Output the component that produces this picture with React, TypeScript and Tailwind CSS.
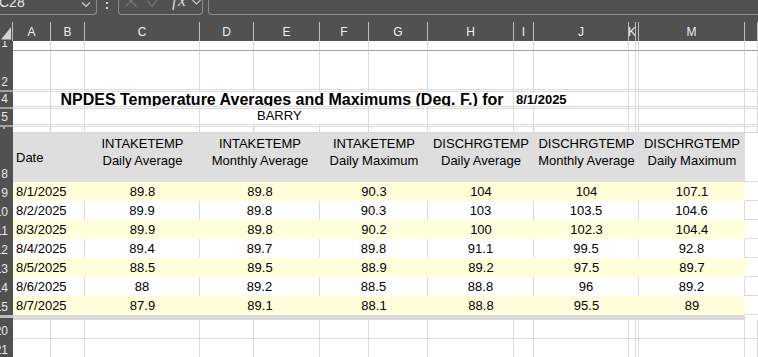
import React from "react";

const COLS: [string, string][] = [
  ["A", "w-[38px]"],
  ["B", "w-[34px]"],
  ["C", "w-[115px]"],
  ["D", "w-[54px]"],
  ["E", "w-[66px]"],
  ["F", "w-[49px]"],
  ["G", "w-[59px]"],
  ["H", "w-[86px]"],
  ["I", "w-[20px]"],
  ["J", "w-[95px]"],
  ["K", "w-[7px]"],
  ["L", "w-[3px]"],
  ["M", "w-[106px]"],
  ["N", "w-[13px]"],
];

const HEAD_LABELS: Record<string, string> = {
  A: "A", B: "B", C: "C", D: "D", E: "E", F: "F", G: "G", H: "H", I: "I", J: "J", K: "K", L: "", M: "M", N: "",
};

const DW = ["w-[115px]", "w-[120px]", "w-[108px]", "w-[106px]", "w-[105px]", "w-[106px]"];

const HEAD = [
  ["INTAKETEMP", "Daily Average"],
  ["INTAKETEMP", "Monthly Average"],
  ["INTAKETEMP", "Daily Maximum"],
  ["DISCHRGTEMP", "Daily Average"],
  ["DISCHRGTEMP", "Monthly Average"],
  ["DISCHRGTEMP", "Daily Maximum"],
];

const DATA = [
  ["8/1/2025", "89.8", "89.8", "90.3", "104", "104", "107.1"],
  ["8/2/2025", "89.9", "89.8", "90.3", "103", "103.5", "104.6"],
  ["8/3/2025", "89.9", "89.8", "90.2", "100", "102.3", "104.4"],
  ["8/4/2025", "89.4", "89.7", "89.8", "91.1", "99.5", "92.8"],
  ["8/5/2025", "88.5", "89.5", "88.9", "89.2", "97.5", "89.7"],
  ["8/6/2025", "88", "89.2", "88.5", "88.8", "96", "89.2"],
  ["8/7/2025", "87.9", "89.1", "88.1", "88.8", "95.5", "89"],
];

function RowHead({ label, cls }: { label?: string; cls?: string }) {
  return (
    <div
      className={`w-[13px] shrink-0 h-full overflow-hidden flex items-end justify-end pr-[5px] pb-[2px] text-[12px] leading-none text-[#e8e8e8] ${
        cls ?? "bg-[#515151]"
      }`}
    >
      <span className="whitespace-nowrap">{label}</span>
    </div>
  );
}

function GridRow({
  h,
  label,
  headCls,
  bottom = "border-b-[#dadada]",
}: {
  h: string;
  label?: string;
  headCls?: string;
  bottom?: string;
}) {
  return (
    <div className={`flex ${h}`}>
      <RowHead label={label} cls={headCls} />
      {COLS.map(([k, w]) => (
        <div key={k} className={`${w} shrink-0 h-full border-r border-b border-r-[#dadada] ${bottom}`} />
      ))}
    </div>
  );
}

function TopBar() {
  return (
    <div className="h-[22px] bg-[#515151] flex items-start">
      {/* Name box */}
      <div className="w-[97px] h-[15px] shrink-0 border-r border-b border-r-[#8c8c8c] border-b-[#8c8c8c] rounded-br-[4px] overflow-hidden flex items-start justify-between">
        <span className="-mt-[5px] -ml-[1px] text-[14px] leading-[14px] text-[#e6e6e6]">C28</span>
        <svg width="10" height="7" viewBox="0 0 10 7" className="mt-[1px] mr-[5px]">
          <path d="M1 1.5 L5 5.5 L9 1.5" fill="none" stroke="#cfcfcf" strokeWidth="1.2" />
        </svg>
      </div>
      {/* colon */}
      <div className="ml-[9px] w-[2px] flex flex-col gap-[3px] pt-[2px]">
        <div className="w-[2px] h-[2px] bg-[#d0d0d0]" />
        <div className="w-[2px] h-[2px] bg-[#d0d0d0]" />
      </div>
      {/* cancel/enter/fx box */}
      <div className="ml-[10px] w-[85px] h-[15px] shrink-0 border-l border-r border-b border-l-[#8c8c8c] border-r-[#8c8c8c] border-b-[#8c8c8c] rounded-b-[4px] overflow-hidden flex items-start">
        <svg width="12" height="12" viewBox="0 0 12 12" className="ml-[6px] -mt-[5px] shrink-0">
          <path d="M0.5 0.5 L11.5 11.5 M11.5 0.5 L0.5 11.5" stroke="#7a7a7a" strokeWidth="1.1" fill="none" />
        </svg>
        <svg width="14" height="12" viewBox="0 0 14 12" className="ml-[10px] -mt-[5px] shrink-0">
          <path d="M0.5 6 L5 11.3 L13.5 0.5" stroke="#7a7a7a" strokeWidth="1.1" fill="none" />
        </svg>
        <div className="ml-[11px] w-[15px] shrink-0 -mt-[9px] font-['Liberation_Serif',serif] italic text-[18px] leading-[18px] tracking-[1px] text-[#d6d6d6]">
          fx
        </div>
        <svg width="9" height="6" viewBox="0 0 9 6" className="ml-[5px] -mt-[1px] shrink-0">
          <path d="M0.5 1 L4.5 5 L8.5 1" fill="none" stroke="#cfcfcf" strokeWidth="1.1" />
        </svg>
      </div>
      {/* formula input */}
      <div className="ml-[5px] flex-1 h-[15px] border-l border-b border-l-[#8c8c8c] border-b-[#8c8c8c] rounded-bl-[4px]" />
    </div>
  );
}

function ColumnHeader() {
  return (
    <div className="flex h-[19px] bg-[#515151] text-[12px] text-[#f0f0f0]">
      <div className="w-[13px] shrink-0 h-full border-r border-r-[#bdbdbd]">
        <svg width="12" height="19" viewBox="0 0 12 19">
          <polygon points="1,17.5 11,5 11,17.5" fill="#d4d4d4" />
        </svg>
      </div>
      {COLS.map(([k, w]) => (
        <div
          key={k}
          className={`${w} shrink-0 h-full border-r border-r-[#bdbdbd] overflow-hidden flex justify-center pt-[1px] leading-[18px]`}
        >
          <span className="whitespace-nowrap">{HEAD_LABELS[k]}</span>
        </div>
      ))}
    </div>
  );
}

export default function App() {
  const cellG = "border-r border-b border-r-[#dadada] border-b-[#dadada]";
  return (
    <div className="w-[758px] h-[357px] overflow-hidden bg-white font-['Liberation_Sans',Arial,sans-serif] text-[13px] text-black">
      <TopBar />
      <ColumnHeader />

      {/* Row 1 (frozen) */}
      <GridRow h="h-[10px]" label="1" bottom="border-b-[#9e9e9e]" />
      {/* Row 2 */}
      <GridRow h="h-[39px]" label="2" />
      {/* Row 3 hidden */}
      <GridRow h="h-[2px]" headCls="bg-[#a0a0a0]" />

      {/* Row 4 title */}
      <div className="flex h-[15px]">
        <RowHead label="4" />
        <div className={`w-[38px] shrink-0 h-full ${cellG}`} />
        <div className={`w-[463px] shrink-0 h-full overflow-hidden text-center whitespace-nowrap font-bold text-[16px] leading-[15px] ${cellG}`}>
          NPDES Temperature Averages and Maximums (Deg. F.) for
        </div>
        <div className={`w-[115px] shrink-0 h-full overflow-hidden pl-[2px] whitespace-nowrap font-bold text-[13px] leading-[15px] ${cellG}`}>
          8/1/2025
        </div>
        <div className={`w-[7px] shrink-0 h-full ${cellG}`} />
        <div className={`w-[3px] shrink-0 h-full ${cellG}`} />
        <div className={`w-[106px] shrink-0 h-full ${cellG}`} />
        <div className={`w-[13px] shrink-0 h-full ${cellG}`} />
      </div>
      <GridRow h="h-[2px]" headCls="bg-[#a0a0a0]" />

      {/* Row 5 BARRY */}
      <div className="flex h-[16px]">
        <RowHead label="5" />
        <div className={`w-[38px] shrink-0 h-full ${cellG}`} />
        <div className={`w-[34px] shrink-0 h-full ${cellG}`} />
        <div className={`w-[115px] shrink-0 h-full ${cellG}`} />
        <div className={`w-[169px] shrink-0 h-full pl-[57px] leading-[14px] ${cellG}`}>BARRY</div>
        <div className={`w-[59px] shrink-0 h-full ${cellG}`} />
        <div className={`w-[86px] shrink-0 h-full ${cellG}`} />
        <div className={`w-[20px] shrink-0 h-full ${cellG}`} />
        <div className={`w-[95px] shrink-0 h-full ${cellG}`} />
        <div className={`w-[7px] shrink-0 h-full ${cellG}`} />
        <div className={`w-[3px] shrink-0 h-full ${cellG}`} />
        <div className={`w-[106px] shrink-0 h-full ${cellG}`} />
        <div className={`w-[13px] shrink-0 h-full ${cellG}`} />
      </div>
      {/* Row 6 hidden */}
      <GridRow h="h-[2px]" headCls="bg-[#a0a0a0]" />
      {/* Row 7 */}
      <GridRow h="h-[6px]" label="7" />

      {/* Row 8 table header */}
      <div className="flex h-[49px]">
        <RowHead label="8" />
        <div className="w-[72px] shrink-0 h-full bg-[#dedede] flex items-center pl-[3px] leading-[17px]">Date</div>
        {HEAD.map((hd, j) => (
          <div key={j} className={`${DW[j]} shrink-0 h-full bg-[#dedede] text-center pt-[2px] leading-[17px] whitespace-nowrap`}>
            <div>{hd[0]}</div>
            <div>{hd[1]}</div>
          </div>
        ))}
        <div className="w-[13px] shrink-0 h-full border-b border-b-[#dadada]" />
      </div>

      {/* Data rows */}
      {DATA.map((r, i) => {
        const yellow = i % 2 === 0;
        const fill = yellow ? "bg-[#ffffdc]" : "bg-white border-r border-r-[#dadada]";
        return (
          <div key={i} className="flex h-[19px]">
            <RowHead label={String(9 + i)} />
            <div className={`w-[72px] shrink-0 h-full pl-[3px] leading-[19px] ${fill}`}>{r[0]}</div>
            {DW.map((w, j) => (
              <div key={j} className={`${w} shrink-0 h-full text-center leading-[19px] ${fill}`}>
                {r[j + 1]}
              </div>
            ))}
            <div className="w-[13px] shrink-0 h-full border-b border-b-[#dadada]" />
          </div>
        );
      })}

      {/* Gray separator bar (hidden rows) */}
      <div className="flex h-[5px]">
        <RowHead cls="bg-[#515151] border-t-[3px] border-t-[#bdbdbd]" />
        <div className="w-[732px] shrink-0 h-full bg-[#d9d9d9]" />
        <div className="w-[13px] shrink-0 h-full" />
      </div>

      {/* Rows 20, 21 */}
      <GridRow h="h-[19px]" label="20" />
      <GridRow h="h-[19px]" label="21" />
    </div>
  );
}
